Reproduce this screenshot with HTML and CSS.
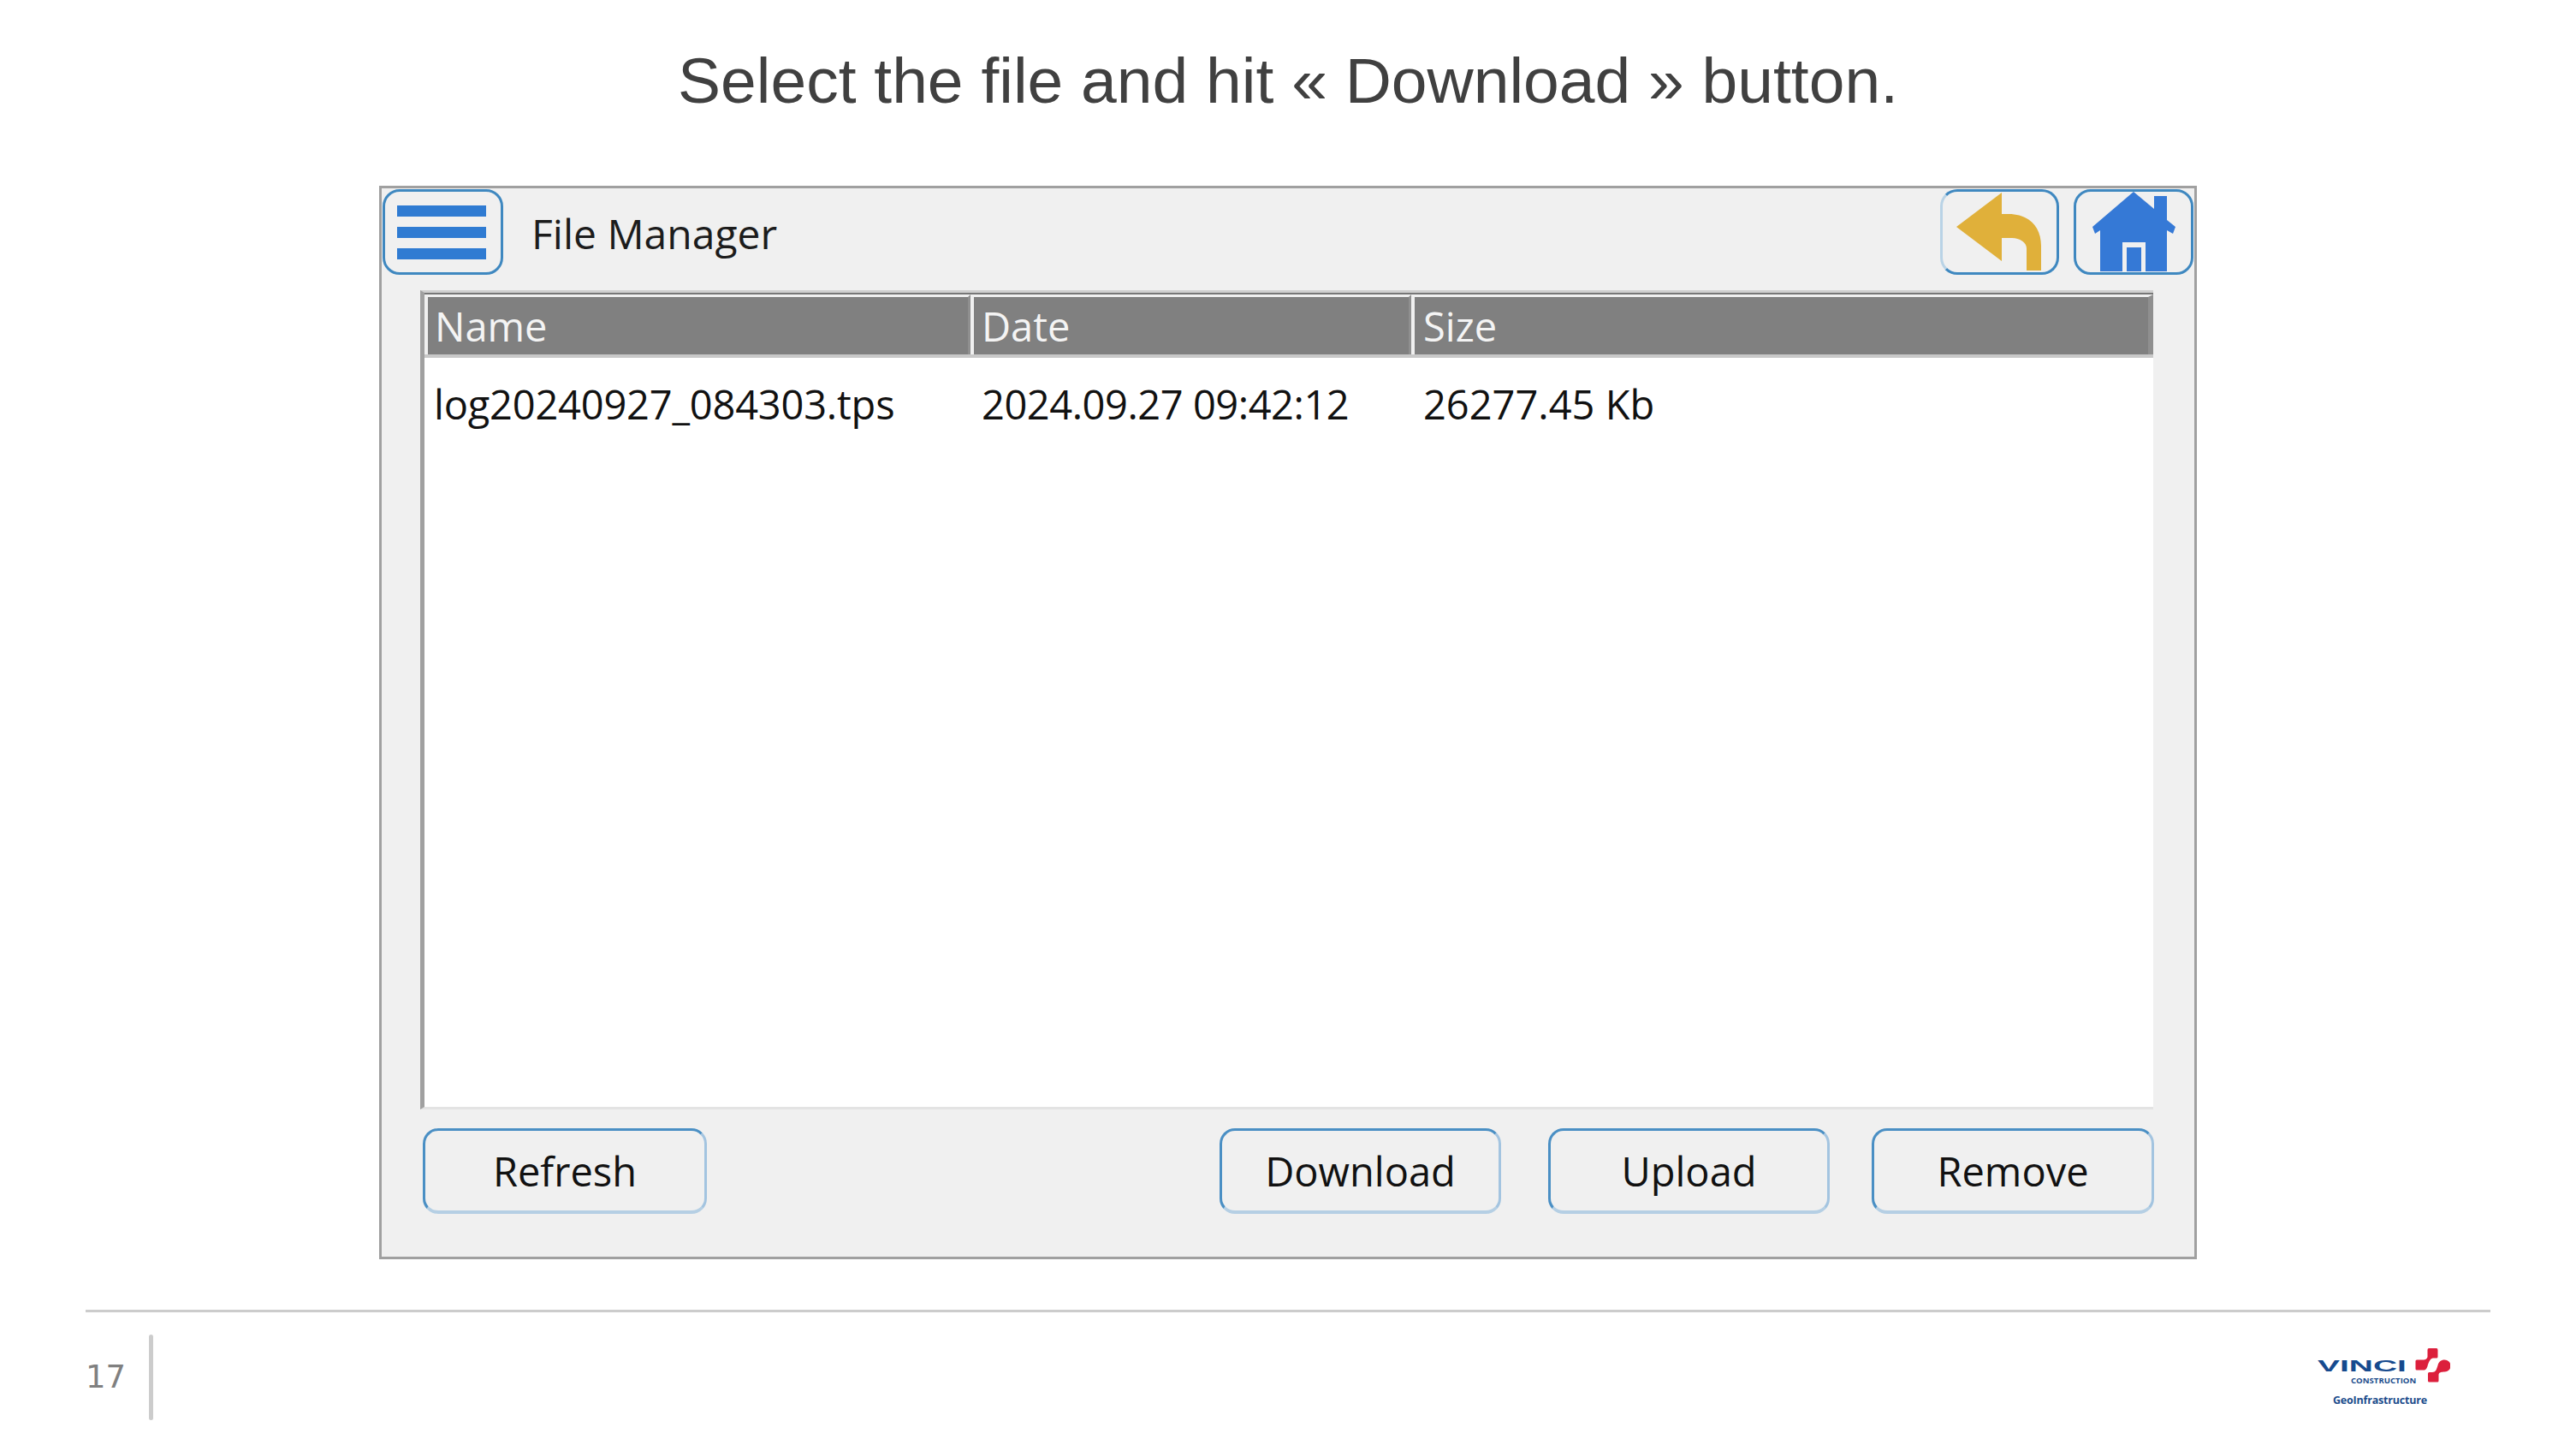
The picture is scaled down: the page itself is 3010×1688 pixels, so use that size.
FILE: index.html
```html
<!DOCTYPE html>
<html lang="en">
<head>
    <meta charset="UTF-8">
    <title>File Manager</title>
    <link rel="stylesheet" href="styles.css">
</head>
<body>

<h1 class="slide-title">Select the file and hit « Download » button.</h1>

<!-- File Manager window -->
<div class="window">
    <div class="topbar">
        <button class="icon-btn menu-btn" type="button">
            <span class="menu-bar"></span>
            <span class="menu-bar"></span>
            <span class="menu-bar"></span>
        </button>
        <span class="window-title">File Manager</span>
        <button class="icon-btn back-btn" type="button">
            <svg class="btn-icon" viewBox="0 0 139 100">
                <path fill="#e0b03a" d="M19 44 L72 4 V29 H80 C104 29 118 44 118 66 V95 H101 V69 C101 62 93 57 84 57 H72 V84 Z"/>
            </svg>
        </button>
        <button class="icon-btn home-btn" type="button">
            <svg class="btn-icon" viewBox="0 0 140 100">
                <path fill="#3579d6" d="M70 3 L94 23 V8 H109 V36 L119 44 L116 52 L109 48 V96 H84 V62 H57 V96 H31 V48 L25 52 L22 44 Z"/>
                <path fill="#3579d6" d="M62 68 H79 V96 H62 Z"/>
            </svg>
        </button>
    </div>

    <div class="file-table">
        <div class="table-head">
            <div class="head-cell col-name">Name</div>
            <div class="head-cell col-date">Date</div>
            <div class="head-cell col-size">Size</div>
        </div>
        <div class="table-row">
            <div class="row-cell col-name">log20240927_084303.tps</div>
            <div class="row-cell col-date">2024.09.27 09:42:12</div>
            <div class="row-cell col-size">26277.45 Kb</div>
        </div>
    </div>

    <div class="actions">
        <button class="action-btn refresh-btn" type="button">Refresh</button>
        <button class="action-btn download-btn" type="button">Download</button>
        <button class="action-btn upload-btn" type="button">Upload</button>
        <button class="action-btn remove-btn" type="button">Remove</button>
    </div>
</div>

<!-- Slide footer -->
<div class="footer">
    <span class="page-num">17</span>
    <span class="footer-bar"></span>
    <div class="logo">
        <div class="logo-main">
            <div class="logo-words">
                <span class="logo-vinci">VINCI</span>
                <span class="logo-construction">CONSTRUCTION</span>
            </div>
            <svg class="logo-mark" viewBox="0 0 41 40">
                <path fill="#dc1f3c" d="M16 0 H25 Q26.5 0 26.5 2 V10 Q26.5 11.5 25 11.5 H22 C18 11.5 17 14 15 19 C14 23 13 25.5 10 25.5 H2 Q.5 25.5 .5 24 V15 Q.5 13.5 2 13.5 H8 C11 13.5 14 13 14.5 10 V2 Q14.5 0 16 0 Z"/>
                <path fill="#dc1f3c" d="M34.5 13.5 A7 7 0 1 1 34.5 27.5 C31 27.5 27.5 28 27.5 31 V38 Q27.5 39.5 26 39.5 H16.5 Q15 39.5 15 38 V29.5 Q15 28 16.5 28 H20 C24 28 25 25 26.5 20 C27.5 16 30 13.5 34.5 13.5 Z"/>
            </svg>
        </div>
        <span class="logo-sub">GeoInfrastructure</span>
    </div>
</div>

</body>
</html>
```

FILE: styles.css
```css
body {
    margin: 0;
    width: 3010px;
    height: 1688px;
    overflow: hidden;
    background-color: #fff;
    font-family: "Open Sans", "Noto Sans", sans-serif;
}

.slide-title {
    margin: 0;
    height: 217px;
    padding-top: 50px;
    box-sizing: border-box;
    text-align: center;
    font-family: "Liberation Sans", Arial, sans-serif;
    font-weight: normal;
    font-size: 75px;
    line-height: 88px;
    color: #404040;
}

.window {
    width: 2124px;
    height: 1254px;
    margin-left: 443px;
    box-sizing: border-box;
    border: 3px solid #a0a0a0;
    background-color: #f0f0f0;
    display: flex;
    flex-direction: column;
}

.topbar {
    display: flex;
    align-items: flex-start;
    height: 118px;
    padding: 1px 1px 0 1px;
}

.icon-btn {
    height: 100px;
    padding: 0;
    box-sizing: border-box;
    border: 3px solid #3f88c0;
    border-radius: 20px;
    background: transparent;
}

.menu-btn {
    width: 141px;
    padding-right: 3px;
    display: flex;
    flex-direction: column;
    justify-content: center;
    align-items: center;
    gap: 12px;
}

.menu-bar {
    width: 104px;
    height: 13px;
    background-color: #2f7bd2;
}

.window-title {
    margin: 20px auto 0 33px;
    font-size: 48px;
    line-height: 64px;
    color: #1c1c1c;
}

.back-btn {
    width: 139px;
    margin-right: 17px;
    border-left-color: #b9d3e6;
}

.home-btn {
    width: 140px;
}

.btn-icon {
    display: block;
    width: calc(100% + 6px);
    height: calc(100% + 6px);
    margin: -3px;
    overflow: visible;
}

.file-table {
    margin: 0 48px 0 45px;
    height: 957px;
    box-sizing: border-box;
    border-top: 3px solid #cfcfcf;
    border-left: 5px solid #a0a0a0;
    border-bottom: 3px solid #e3e3e3;
    background-color: #fff;
}

.table-head {
    display: flex;
    height: 76px;
    box-sizing: border-box;
    border-top: 2px solid #777;
    border-bottom: 4px solid #c8c8c8;
}

.head-cell {
    box-sizing: border-box;
    border-top: 3px solid #f0f0f0;
    border-left: 4px solid #f0f0f0;
    border-right: 3px solid #8f8f8f;
    background-color: #808080;
    color: #f4f4f4;
    font-size: 47px;
    line-height: 68px;
}

.head-cell.col-size {
    border-right-width: 6px;
}

.table-row {
    display: flex;
    padding-top: 22px;
}

.row-cell {
    box-sizing: border-box;
    color: #111;
    font-size: 47px;
    line-height: 64px;
}

.row-cell.col-name {
    letter-spacing: -0.2px;
}

.row-cell.col-date {
    letter-spacing: -0.45px;
}

.col-name {
    width: 638px;
    padding-left: 11px;
}

.col-date {
    width: 515px;
    padding-left: 13px;
}

.col-size {
    flex: 1;
    padding-left: 14px;
}

.head-cell.col-name {
    padding-left: 8px;
}

.head-cell.col-date {
    padding-left: 9px;
}

.head-cell.col-size {
    padding-left: 10px;
}

.actions {
    display: flex;
    margin: 22px 47px 0 48px;
}

.action-btn {
    width: 329px;
    height: 100px;
    padding: 0;
    box-sizing: border-box;
    border: 3px solid #4a8fc4;
    border-right-color: #a3c4e0;
    border-bottom: 4px solid #b5cfe4;
    border-radius: 18px;
    background: transparent;
    color: #111;
    font-family: inherit;
    font-size: 47px;
}

.refresh-btn {
    margin-right: auto;
    width: 332px;
}

.upload-btn {
    margin: 0 49px 0 55px;
}

.remove-btn {
    width: 330px;
}

.footer {
    display: flex;
    align-items: flex-start;
    width: 2810px;
    height: 129px;
    margin: 59px 0 0 100px;
    border-top: 3px solid #ccc;
}

.page-num {
    margin-top: 51px;
    width: 74px;
    font-family: "DejaVu Sans", sans-serif;
    font-size: 37px;
    line-height: 50px;
    color: #808080;
}

.footer-bar {
    width: 5px;
    height: 100px;
    margin-top: 26px;
    border-radius: 3px;
    background-color: #ccc;
}

.logo {
    width: 155px;
    margin: 42px 47px 0 auto;
    display: flex;
    flex-direction: column;
    color: #1b4c8c;
    font-family: "Open Sans", sans-serif;
    font-weight: bold;
}

.logo-main {
    display: flex;
    align-items: flex-start;
}

.logo-words {
    display: flex;
    flex-direction: column;
    width: 114px;
    margin-top: 14px;
}

.logo-vinci {
    font-family: "Liberation Sans", sans-serif;
    font-size: 19px;
    line-height: 14px;
    transform: scaleX(2.05);
    transform-origin: left;
    color: #164a8e;
}

.logo-construction {
    margin: 5px 0 0 39px;
    font-size: 9.6px;
    line-height: 10px;
    white-space: nowrap;
}

.logo-mark {
    flex: none;
    width: 41px;
    height: 40px;
}

.logo-sub {
    margin: 10px 0 0 18px;
    font-size: 12.5px;
    letter-spacing: -0.2px;
    line-height: 16px;
    white-space: nowrap;
}
```
